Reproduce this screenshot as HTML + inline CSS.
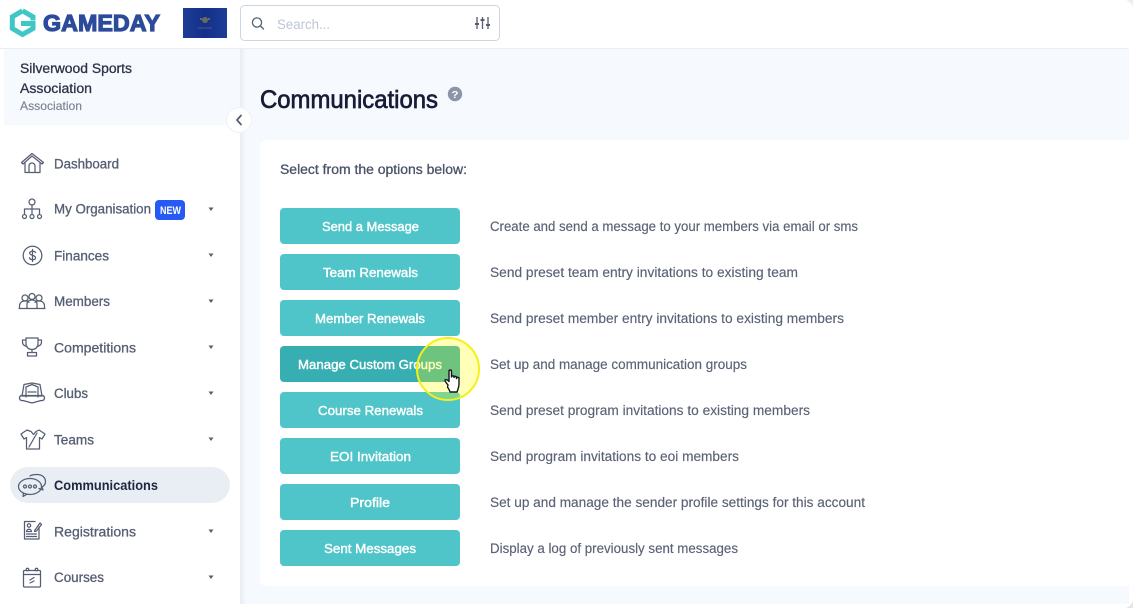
<!DOCTYPE html>
<html><head><meta charset="utf-8"><style>
html,body{margin:0;padding:0;background:#fff;width:1133px;height:608px;overflow:hidden}
svg{display:block}
text{font-family:"Liberation Sans",sans-serif}
.n{font-size:13.5px;fill:#565e73;stroke:#565e73;stroke-width:.3}
.b{font-size:13px;fill:#fff;stroke:#fff;stroke-width:.4;text-anchor:start}
.d{font-size:13.5px;fill:#5a6275;stroke:#5a6275;stroke-width:.15}
.i{fill:none;stroke:#565e73;stroke-width:1.25;stroke-linejoin:round;stroke-linecap:round}
</style></head><body>
<svg width="1133" height="608" viewBox="0 0 1133 608" xmlns="http://www.w3.org/2000/svg">
<defs>
<linearGradient id="fl" x1="0" y1="0" x2="1" y2="0"><stop offset="0" stop-color="#1b3d96"/><stop offset=".5" stop-color="#14308a"/><stop offset="1" stop-color="#1b3d96"/></linearGradient>
<linearGradient id="sh" x1="0" y1="0" x2="1" y2="0"><stop offset="0" stop-color="#e8edf4"/><stop offset="1" stop-color="#f6f9fd"/></linearGradient>
</defs>
<rect width="1133" height="608" fill="#fff"/>
<!-- main bg -->
<rect x="240" y="49" width="889" height="555" fill="#f6f9fd"/>
<rect x="0" y="48" width="1129" height="1" fill="#e9eef5"/>
<rect x="240" y="49" width="6" height="555" fill="url(#sh)"/>
<!-- sidebar header -->
<rect x="4" y="49" width="236" height="76" fill="#f6f9fd"/>
<!-- corners -->
<path d="M1126 0h7v7q-2-5-7-7z" fill="#eceef0"/>
<path d="M1133 601v7h-7q5-2 7-7z" fill="#e4e6e8"/>
<!-- card -->
<path d="M266 140H1129V586H266a6 6 0 0 1-6-6V146a6 6 0 0 1 6-6z" fill="#fff"/>

<!-- logo -->
<path d="M22.500 10.800L33 16.800V20.500M22.500 10.800L12.300 16.800V28.500L22.500 34.500L33 28.500V23.500H21" fill="none" stroke="#41c6c6" stroke-width="5" stroke-linejoin="miter"/>
<text x="43" y="31" font-size="23.500" font-weight="700" textLength="117" lengthAdjust="spacingAndGlyphs" fill="#2c4b9b" stroke="#2c4b9b" stroke-width="1.200">GAMEDAY</text>
<!-- flag -->
<rect x="183" y="8" width="44" height="30" fill="url(#fl)"/>
<circle cx="205" cy="20" r="3" fill="#6d6a5c"/>
<circle cx="201" cy="19" r="1" fill="#8a7a4a"/><circle cx="209" cy="19" r="1" fill="#8a7a4a"/>
<rect x="198" y="27.500" width="14" height="1" fill="#4a5a80"/>
<!-- search -->
<rect x="240.500" y="5.500" width="259" height="35" rx="4" fill="#fff" stroke="#ccd5e0"/>
<circle cx="257" cy="22.500" r="4.600" fill="none" stroke="#596275" stroke-width="1.300"/>
<path d="M260.500 26l3 3" stroke="#596275" stroke-width="1.400" stroke-linecap="round"/>
<text x="277" y="29" font-size="14" textLength="53" lengthAdjust="spacingAndGlyphs" fill="#bcc6d4">Search...</text>
<path d="M477 17v12M482.500 17v12M488 17v12" stroke="#565e73" stroke-width="1.300"/>
<path d="M475 24h4M480.500 20h4M486 25h4" stroke="#565e73" stroke-width="2"/>

<!-- org -->
<text x="20" y="73" font-size="13.500" textLength="112" lengthAdjust="spacingAndGlyphs" fill="#2d3348" stroke="#2d3348" stroke-width=".3">Silverwood Sports</text>
<text x="20" y="93" font-size="13.500" textLength="72" lengthAdjust="spacingAndGlyphs" fill="#2d3348" stroke="#2d3348" stroke-width=".3">Association</text>
<text x="20" y="110" font-size="12" textLength="62" lengthAdjust="spacingAndGlyphs" fill="#7b8396" stroke="#7b8396" stroke-width=".15">Association</text>
<!-- collapse -->
<circle cx="239" cy="120" r="12.500" fill="#fff" stroke="#eef1f5"/>
<path d="M241 115.500l-4 4.500 4 4.500" fill="none" stroke="#565e73" stroke-width="1.800" stroke-linecap="round" stroke-linejoin="round"/>

<!-- title -->
<text x="260" y="108" font-size="25" textLength="178" lengthAdjust="spacingAndGlyphs" fill="#171d36" stroke="#171d36" stroke-width=".7">Communications</text>
<circle cx="455" cy="94" r="7.200" fill="#8c94a8"/>
<text x="451.500" y="98" font-size="10.500" font-weight="700" fill="#fff" textLength="7" lengthAdjust="spacingAndGlyphs">?</text>

<!-- nav -->
<rect x="10" y="467" width="220" height="36" rx="18" fill="#e9eef5"/>
<text class="n" x="54" y="168.500" textLength="65" lengthAdjust="spacingAndGlyphs">Dashboard</text>
<text class="n" x="54" y="213.500" textLength="97" lengthAdjust="spacingAndGlyphs">My Organisation</text>
<text class="n" x="54" y="260.500" textLength="55" lengthAdjust="spacingAndGlyphs">Finances</text>
<text class="n" x="54" y="306" textLength="56" lengthAdjust="spacingAndGlyphs">Members</text>
<text class="n" x="54" y="352.500" textLength="82" lengthAdjust="spacingAndGlyphs">Competitions</text>
<text class="n" x="54" y="398" textLength="34" lengthAdjust="spacingAndGlyphs">Clubs</text>
<text class="n" x="54" y="444.500" textLength="40" lengthAdjust="spacingAndGlyphs">Teams</text>
<text x="54" y="490" font-size="13.500" font-weight="700" textLength="104" lengthAdjust="spacingAndGlyphs" fill="#1f2640">Communications</text>
<text class="n" x="54" y="536.500" textLength="82" lengthAdjust="spacingAndGlyphs">Registrations</text>
<text class="n" x="54" y="582" textLength="50" lengthAdjust="spacingAndGlyphs">Courses</text>
<!-- new badge -->
<rect x="155" y="200" width="30" height="20" rx="4" fill="#2759f5"/>
<text x="160" y="214" font-size="11" font-weight="700" fill="#fff" textLength="21" lengthAdjust="spacingAndGlyphs">NEW</text>
<!-- carets -->
<g fill="#565e73">
<path d="M208.500 207.500h5l-2.500 3.500z"/><path d="M208.500 253.500h5l-2.500 3.500z"/><path d="M208.500 299.500h5l-2.500 3.500z"/><path d="M208.500 345.500h5l-2.500 3.500z"/><path d="M208.500 391.500h5l-2.500 3.500z"/><path d="M208.500 437.500h5l-2.500 3.500z"/><path d="M208.500 529.500h5l-2.500 3.500z"/><path d="M208.500 575.500h5l-2.500 3.500z"/>
</g>
<!-- icons -->
<g class="i">
<!-- home -->
<path d="M21.500 162.500L32 153.500L43.500 162.500L42 164L32 156L23 164Z"/>
<path d="M25 163v9.500h15V163M29 172.500v-6.500a3 3 0 0 1 6 0v6.500"/>
<!-- org -->
<circle cx="32" cy="202" r="3"/><path d="M32 205v4M24.500 214v-5h15v5M32 209v5"/>
<circle cx="24.500" cy="216.500" r="2"/><circle cx="32" cy="216.500" r="2"/><circle cx="39.500" cy="216.500" r="2"/>
<!-- dollar -->
<circle cx="32.500" cy="255.500" r="9.300"/>
<path d="M35.500 252.500c-.5-1.500-5.500-2-5.800.5-.3 3 6 1.500 5.800 5-.2 2.500-5.500 2-6-.2M32.500 249.500v12"/>
<!-- members -->
<circle cx="32" cy="296.500" r="3"/><circle cx="25" cy="298" r="3"/><circle cx="39" cy="298" r="3"/>
<path d="M19.500 308v-2c0-3 2-5 5.500-5s4 1.500 4 1.500M44.500 308v-2c0-3-2-5-5.500-5s-4 1.500-4 1.500M27 308v-4c0-2.500 2-4 5-4s5 1.500 5 4v4M19 308.500h26"/>
<!-- trophy -->
<path d="M26 338h12v6c0 3-2.500 5.500-6 5.500s-6-2.500-6-5.500zM26 340h-3.500v2c0 2.500 2 4 4.500 4.500M38 340h3.500v2c0 2.500-2 4-4.500 4.500M32 349.500v3M27.500 352.500h9v3.500h-9z"/>
<!-- clubs -->
<path d="M26 397v-10l6-2.500 6 2.500v10M24 384.500l8-1.500 8 1.500 2 11.500H22z"/><path d="M28 392h8M19.500 398c0-2 2-3 3.500-2.500h18c1.500-.5 3.500.5 3.500 2.500s-2 3-3.500 2.500l-9 2.500-9-2.500c-1.500.5-3.500-.5-3.500-2.500z"/>
<!-- teams -->
<path d="M27 430l-6 4 3 5 2.500-1.500V449h13V437.500l2.500 1.500 3-5-6-4-3 1.500-2.500 3-2.500-3zM29 447l8-14"/>
<!-- comms -->
<ellipse cx="30" cy="486.500" rx="11.500" ry="8"/><path d="M23.500 493l-.5 3.500 4.500-2.500"/>
<path d="M30 476c2-1.500 5-1.500 7-1.500 5 0 8.500 3 8.500 7 0 2.500-1.500 4.500-3.500 5.500l1 3-4-1.500"/>
<circle cx="25" cy="486.500" r="1.500"/><circle cx="30" cy="486.500" r="1.500"/><circle cx="35" cy="486.500" r="1.500"/>
<!-- regs -->
<path d="M35 521.500H24.500v17.500h14.500V527"/><circle cx="29" cy="525.500" r="1.700"/><path d="M26.500 531.500c0-3 5-3 5 0zM26.500 534h10M26.500 536.500h10M35 530l5-7 1.500 1.500-5 6.500-2 .5z"/>
<!-- courses -->
<rect x="23.500" y="570.500" width="17" height="16.500" rx="1"/><path d="M23.500 574.500h17"/><circle cx="27.500" cy="569.500" r="1.300"/><circle cx="36.500" cy="569.500" r="1.300"/><path d="M30 583l4-2M30 580l4-2.500"/>
</g>

<!-- buttons -->
<g fill="#50c5c9">
<rect x="280" y="208" width="180" height="36" rx="4"/><rect x="280" y="254" width="180" height="36" rx="4"/><rect x="280" y="300" width="180" height="36" rx="4"/><rect x="280" y="346" width="180" height="36" rx="4" fill="#37aeb1"/><rect x="280" y="392" width="180" height="36" rx="4"/><rect x="280" y="438" width="180" height="36" rx="4"/><rect x="280" y="484" width="180" height="36" rx="4"/><rect x="280" y="530" width="180" height="36" rx="4"/>
</g>
<text class="b" x="322" y="231" textLength="97" lengthAdjust="spacingAndGlyphs">Send a Message</text>
<text class="b" x="323" y="277" textLength="95" lengthAdjust="spacingAndGlyphs">Team Renewals</text>
<text class="b" x="315" y="323" textLength="110" lengthAdjust="spacingAndGlyphs">Member Renewals</text>
<text class="b" x="298" y="369" textLength="144" lengthAdjust="spacingAndGlyphs">Manage Custom Groups</text>
<text class="b" x="318" y="415" textLength="105" lengthAdjust="spacingAndGlyphs">Course Renewals</text>
<text class="b" x="330" y="461" textLength="81" lengthAdjust="spacingAndGlyphs">EOI Invitation</text>
<text class="b" x="350" y="507" textLength="40" lengthAdjust="spacingAndGlyphs">Profile</text>
<text class="b" x="324" y="553" textLength="92" lengthAdjust="spacingAndGlyphs">Sent Messages</text>

<!-- copy -->
<text x="280" y="174" font-size="13.500" textLength="187" lengthAdjust="spacingAndGlyphs" fill="#4a5268" stroke="#4a5268" stroke-width=".3">Select from the options below:</text>
<text class="d" x="490" y="231" textLength="368" lengthAdjust="spacingAndGlyphs">Create and send a message to your members via email or sms</text>
<text class="d" x="490" y="277" textLength="308" lengthAdjust="spacingAndGlyphs">Send preset team entry invitations to existing team</text>
<text class="d" x="490" y="323" textLength="354" lengthAdjust="spacingAndGlyphs">Send preset member entry invitations to existing members</text>
<text class="d" x="490" y="369" textLength="257" lengthAdjust="spacingAndGlyphs">Set up and manage communication groups</text>
<text class="d" x="490" y="415" textLength="320" lengthAdjust="spacingAndGlyphs">Send preset program invitations to existing members</text>
<text class="d" x="490" y="461" textLength="249" lengthAdjust="spacingAndGlyphs">Send program invitations to eoi members</text>
<text class="d" x="490" y="507" textLength="375" lengthAdjust="spacingAndGlyphs">Set up and manage the sender profile settings for this account</text>
<text class="d" x="490" y="553" textLength="248" lengthAdjust="spacingAndGlyphs">Display a log of previously sent messages</text>

<!-- highlight -->
<circle cx="448" cy="369" r="31" fill="#ffff00" fill-opacity=".28" stroke="#f6f013" stroke-width="2"/>
<!-- cursor -->
<path d="M448 385c-1.500-2-3.500-4-3-5 1-1 3 .5 4 1.500V371.500c0-2 2.500-2 2.500 0v5.500c0-1.500 2.500-1.500 2.500 0v.5c0-1.500 2.500-1.500 2.500 0v1c0-1.500 2.500-1.500 2.500 0v5c0 3-1 6-2 8.500h-7c-.5-2-1.500-3.500-2.500-5z" fill="#fff" stroke="#15171c" stroke-width="1.400" stroke-linejoin="round"/>
</svg>
</body></html>
